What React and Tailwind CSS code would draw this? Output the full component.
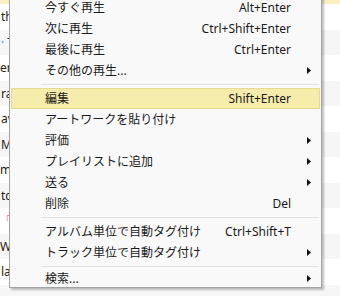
import React from 'react'

const listRows = [
  { bg: 'bg-[#f8efbd]', h: 'h-[26px]', text: '' },
  { bg: 'bg-white', h: 'h-[26px]', text: 'th', ml: 'ml-[1px]' },
  { bg: 'bg-[#f6f6f6]', h: 'h-[25px]', text: 'T', dot: true },
  { bg: 'bg-white', h: 'h-[26px]', text: 'eri', ml: 'ml-0' },
  { bg: 'bg-[#f6f6f6]', h: 'h-[25px]', text: 'ra', ml: 'ml-[1px]' },
  { bg: 'bg-white', h: 'h-[26px]', text: 'av', ml: 'ml-[1px]' },
  { bg: 'bg-[#f6f6f6]', h: 'h-[25px]', text: 'MU', ml: 'ml-[1px]' },
  { bg: 'bg-white', h: 'h-[26px]', text: 'm', ml: 'ml-0' },
  { bg: 'bg-[#f6f6f6]', h: 'h-[25px]', text: 'tc', ml: 'ml-[1px]' },
  { bg: 'bg-white', h: 'h-[26px]', text: '「', red: true, ml: 'ml-0' },
  { bg: 'bg-[#f6f6f6]', h: 'h-[25px]', text: 'W', ml: 'ml-0' },
  { bg: 'bg-white', h: 'h-[26px]', text: 'la', ml: 'ml-[1px]' },
  { bg: 'bg-[#f6f6f6]', h: 'h-[25px]', text: '' },
]

const groups = [
  [
    { label: '今すぐ再生', key: 'Alt+Enter' },
    { label: '次に再生', key: 'Ctrl+Shift+Enter' },
    { label: '最後に再生', key: 'Ctrl+Enter' },
    { label: 'その他の再生...', sub: true },
  ],
  [
    { label: '編集', key: 'Shift+Enter', active: true },
    { label: 'アートワークを貼り付け' },
    { label: '評価', sub: true },
    { label: 'プレイリストに追加', sub: true },
    { label: '送る', sub: true },
    { label: '削除', key: 'Del' },
  ],
  [
    { label: 'アルバム単位で自動タグ付け', key: 'Ctrl+Shift+T' },
    { label: 'トラック単位で自動タグ付け', sub: true },
  ],
  [
    { label: '検索...', sub: true, last: true },
  ],
]

function Arrow() {
  return (
    <svg width="4" height="7" viewBox="0 0 4 7" className="block">
      <path d="M0 0 L4 3.5 L0 7 Z" fill="#111" />
    </svg>
  )
}

function MenuItem({ item }) {
  return (
    <div
      className={`flex items-center mx-[1px] pl-[33px] ${item.last ? 'h-[17px]' : 'h-[21px]'} ${
        item.active ? 'bg-[#f6ecac] border border-[#e6da92]' : 'border border-transparent'
      }`}
    >
      <span className="flex-1 whitespace-nowrap">{item.label}</span>
      {item.key && <span className="whitespace-nowrap">{item.key}</span>}
      <span className="w-[28px] flex items-center pl-[16px]">{item.sub && <Arrow />}</span>
    </div>
  )
}

export default function App() {
  return (
    <div className="relative w-[340px] h-[296px] overflow-hidden bg-white">
      {/* list behind the menu */}
      <div className="flex flex-col mt-[-22px] font-['Noto_Sans',sans-serif] text-[12px] text-[#222]">
        {listRows.map((r, i) => (
          <div key={i} className={`${r.h} ${r.bg} flex items-center`}>
            <span className={`${r.ml || ''} whitespace-nowrap ${r.red ? 'text-[#b33a2a]' : ''}`}>
              {r.dot && <span className="text-[#3a7bd5] ml-[1px] mr-[3px]">·</span>}
              {r.text}
            </span>
          </div>
        ))}
      </div>

      {/* context menu */}
      <div className="absolute left-[9px] top-[-6px] w-[313px] bg-[#f9f9f9] border border-[#a3a3a3] shadow-[2px_2px_2px_rgba(0,0,0,0.25)] pt-[2px] font-['Noto_Sans','Noto_Sans_CJK_JP',sans-serif] text-[12px] leading-none text-[#1a1a1a]">
        {groups.map((g, gi) => (
          <div key={gi}>
            {gi > 0 && (
              <div className="h-[7px] pt-[3px] pl-[31px] pr-[2px]">
                <div className="h-px bg-[#e0e0e0]" />
              </div>
            )}
            {g.map((item, ii) => (
              <MenuItem key={ii} item={item} />
            ))}
          </div>
        ))}
      </div>
    </div>
  )
}
